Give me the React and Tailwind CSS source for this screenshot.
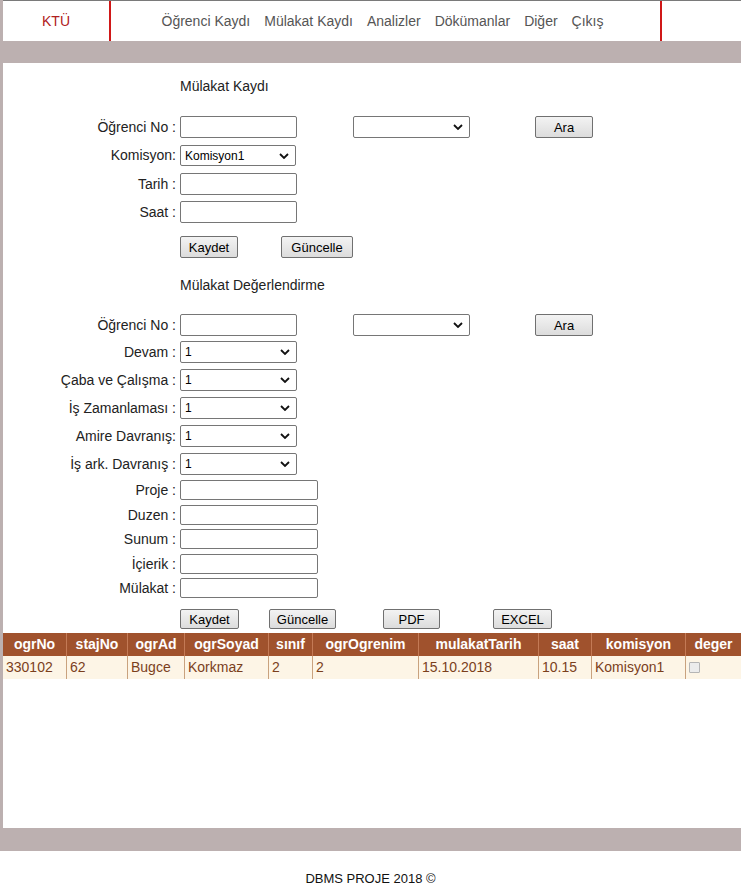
import React from "react";

const Chevron = () => (
  <svg className="pointer-events-none absolute right-[6px] top-1/2 -translate-y-1/2" width="10" height="7" viewBox="0 0 10 7">
    <polyline points="1,1.5 5,5.5 9,1.5" fill="none" stroke="#111" strokeWidth="1.8" />
  </svg>
);

const Select = ({ value, w = "w-[117px]", h = "h-[22px]" }) => (
  <div className={`relative ${w} ${h} border border-[#767676] rounded-[2px] bg-white`}>
    <span className="absolute left-[4px] top-1/2 -translate-y-1/2 text-[12px] text-black font-['Liberation_Sans',Arial,sans-serif]">{value}</span>
    <Chevron />
  </div>
);

const Input = ({ w = "w-[117px]", h = "h-[22px]" }) => (
  <div className={`${w} ${h} border border-[#767676] rounded-[2px] bg-white`} />
);

const Btn = ({ children, w, h = "h-[22px]", ml = "" }) => (
  <button
    className={`${w} ${h} ${ml} border border-[#707070] rounded-[2px] bg-gradient-to-b from-[#f3f3f3] to-[#dcdcdc] text-[13px] text-black font-['Liberation_Sans',Arial,sans-serif] leading-none flex items-center justify-center`}
  >
    {children}
  </button>
);

const Row = ({ label, mt, h = "h-[22px]", children }) => (
  <div className={`flex items-center ${mt} ${h}`}>
    <div className="w-[174px] text-right text-[14px] text-[#222] whitespace-nowrap pr-[1px]">{label}</div>
    <div className="ml-[3px] flex items-center">{children}</div>
  </div>
);

const cols = [
  { k: "ogrNo", w: "w-[64px]", v: "330102" },
  { k: "stajNo", w: "w-[61px]", v: "62" },
  { k: "ogrAd", w: "w-[57px]", v: "Bugce" },
  { k: "ogrSoyad", w: "w-[84px]", v: "Korkmaz" },
  { k: "sınıf", w: "w-[44px]", v: "2" },
  { k: "ogrOgrenim", w: "w-[106px]", v: "2" },
  { k: "mulakatTarih", w: "w-[120px]", v: "15.10.2018" },
  { k: "saat", w: "w-[53px]", v: "10.15" },
  { k: "komisyon", w: "w-[94px]", v: "Komisyon1" },
  { k: "deger", w: "flex-1", v: null },
];

export default function App() {
  return (
    <div className="w-[741px] bg-white font-['Liberation_Sans',Arial,sans-serif]">
      <div className="border-l-[3px] border-[#bcb0b0]">
        {/* Header */}
        <div className="border-t border-[#7a7a7a] h-[41px] flex">
          <div className="w-[106px] flex items-center justify-center text-[14px] text-[#b02020]">KTÜ</div>
          <div className="w-[2px] bg-[#d01818]" />
          <nav className="flex-1 flex items-center justify-center gap-[14px] text-[14px] text-[#555] pr-[6px]">
            <a>Öğrenci Kaydı</a>
            <a>Mülakat Kaydı</a>
            <a>Analizler</a>
            <a>Dökümanlar</a>
            <a>Diğer</a>
            <a>Çıkış</a>
          </nav>
          <div className="w-[2px] bg-[#d01818]" />
          <div className="w-[79px]" />
        </div>
        <div className="h-[22px] bg-[#bcb0b0]" />

        {/* Content */}
        <div className="h-[765px] pt-[13px]">
          <div className="h-[17px] pl-[177px] text-[14px] text-[#222]">Mülakat Kaydı</div>
          <Row label="Öğrenci No :" mt="mt-[23px]">
            <Input />
            <div className="ml-[56px]"><Select value="" /></div>
            <div className="ml-[65px]"><Btn w="w-[58px]">Ara</Btn></div>
          </Row>
          <Row label="Komisyon:" mt="mt-[7px]" h="h-[21px]">
            <Select value="Komisyon1" w="w-[116px]" h="h-[21px]" />
          </Row>
          <Row label="Tarih :" mt="mt-[7px]"><Input /></Row>
          <Row label="Saat :" mt="mt-[6px]"><Input /></Row>
          <div className="mt-[13px] pl-[177px] flex">
            <Btn w="w-[58px]">Kaydet</Btn>
            <Btn w="w-[72px]" ml="ml-[43px]">Güncelle</Btn>
          </div>

          <div className="mt-[17px] h-[17px] pl-[177px] text-[14px] text-[#222]">Mülakat Değerlendirme</div>
          <Row label="Öğrenci No :" mt="mt-[22px]">
            <Input />
            <div className="ml-[56px]"><Select value="" /></div>
            <div className="ml-[65px]"><Btn w="w-[58px]">Ara</Btn></div>
          </Row>
          <Row label="Devam :" mt="mt-[5px]"><Select value="1" /></Row>
          <Row label="Çaba ve Çalışma :" mt="mt-[6px]"><Select value="1" /></Row>
          <Row label="İş Zamanlaması :" mt="mt-[6px]"><Select value="1" /></Row>
          <Row label="Amire Davranış:" mt="mt-[6px]"><Select value="1" /></Row>
          <Row label="İş ark. Davranış :" mt="mt-[6px]"><Select value="1" /></Row>
          <Row label="Proje :" mt="mt-[5px]" h="h-[20px]"><Input w="w-[138px]" h="h-[20px]" /></Row>
          <Row label="Duzen :" mt="mt-[5px]" h="h-[20px]"><Input w="w-[138px]" h="h-[20px]" /></Row>
          <Row label="Sunum :" mt="mt-[4px]" h="h-[20px]"><Input w="w-[138px]" h="h-[20px]" /></Row>
          <Row label="İçierik :" mt="mt-[5px]" h="h-[20px]"><Input w="w-[138px]" h="h-[20px]" /></Row>
          <Row label="Mülakat :" mt="mt-[4px]" h="h-[20px]"><Input w="w-[138px]" h="h-[20px]" /></Row>
          <div className="mt-[11px] pl-[177px] flex">
            <Btn w="w-[59px]" h="h-[20px]">Kaydet</Btn>
            <Btn w="w-[67px]" h="h-[20px]" ml="ml-[30px]">Güncelle</Btn>
            <Btn w="w-[57px]" h="h-[20px]" ml="ml-[47px]">PDF</Btn>
            <Btn w="w-[59px]" h="h-[20px]" ml="ml-[53px]">EXCEL</Btn>
          </div>

          {/* Table */}
          <div className="mt-[4px] text-[14px]">
            <div className="flex h-[23px] bg-[#a0522d] text-white font-bold">
              {cols.map((c) => (
                <div key={c.k} className={`${c.w} flex items-center justify-center border-r border-[#c47a56] last:border-r-0`}>
                  {c.k}
                </div>
              ))}
            </div>
            <div className="flex h-[23px] bg-[#fdf5e6] text-[#7b3f1c]">
              {cols.map((c) => (
                <div key={c.k} className={`${c.w} flex items-center pl-[3px] border-r border-[#c9a27e] last:border-r-0`}>
                  {c.v !== null ? c.v : <span className="w-[11px] h-[11px] border border-[#b5b5b5] bg-[#ececec] rounded-[1px]" />}
                </div>
              ))}
            </div>
          </div>
        </div>
        <div className="h-[23px] bg-[#bcb0b0]" />
      </div>

      {/* Footer */}
      <footer className="h-[45px] flex items-center justify-center pt-[11px] text-[13px] text-[#111]">
        DBMS PROJE 2018 ©
      </footer>
    </div>
  );
}
